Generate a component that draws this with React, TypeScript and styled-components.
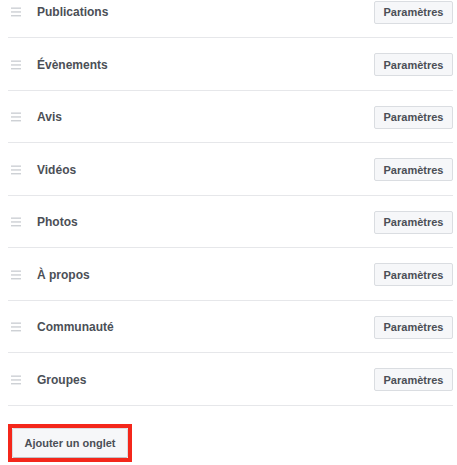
import styled, { createGlobalStyle } from "styled-components";

const GlobalStyle = createGlobalStyle`
  html, body {
    margin: 0;
    padding: 0;
    background: #ffffff;
    overflow: hidden;
  }
  body {
    font-family: "Liberation Sans", Arial, sans-serif;
    color: #4b4f56;
  }
`;

const Page = styled.div`
  padding: 0 4px 0 8px;
  margin-top: -14.5px;
`;

const TabList = styled.ul`
  list-style: none;
  margin: 0;
  padding: 0;
`;

const TabRow = styled.li`
  box-sizing: border-box;
  height: 52.5px;
  display: flex;
  align-items: center;
  border-bottom: 1px solid #e6e7ea;
  padding-top: 2px;
`;

const Handle = styled.svg`
  flex: none;
  margin-left: 3px;
  margin-right: 16px;
`;

const TabName = styled.span`
  flex: 1;
  font-size: 12px;
  font-weight: bold;
  color: #4b4f56;
`;

const Button = styled.button<{ $big?: boolean }>`
  box-sizing: border-box;
  font-family: "Liberation Sans", Arial, sans-serif;
  font-size: 11px;
  font-weight: bold;
  color: #4b4f56;
  background: #f6f7f9;
  border: 1px solid #dadde1;
  border-bottom-color: ${p => (p.$big ? "#bfc2c7" : "#dadde1")};
  border-radius: 2px;
  height: ${p => (p.$big ? "30px" : "23px")};
  width: ${p => (p.$big ? "116px" : "79px")};
  padding: 0;
  cursor: pointer;
`;

const Footer = styled.div`
  padding-top: 18px;
`;

const Highlight = styled.div`
  display: inline-flex;
  border: 4px solid #f4271b;
`;

const tabs = [
  "Publications",
  "Évènements",
  "Avis",
  "Vidéos",
  "Photos",
  "À propos",
  "Communauté",
  "Groupes",
];

const HandleIcon = () => (
  <Handle width="10" height="10" viewBox="0 0 10 10">
    <rect x="0" y="0.5" width="10" height="1.3" fill="#c9ccd1" />
    <rect x="0" y="4.3" width="10" height="1.3" fill="#c9ccd1" />
    <rect x="0" y="8.1" width="10" height="1.3" fill="#c9ccd1" />
  </Handle>
);

export default function App() {
  return <>
    <GlobalStyle />
    <Page>
      <TabList>
        {tabs.map(t => (
          <TabRow key={t}>
            <HandleIcon />
            <TabName>{t}</TabName>
            <Button>Paramètres</Button>
          </TabRow>
        ))}
      </TabList>
      <Footer>
        <Highlight>
          <Button $big>Ajouter un onglet</Button>
        </Highlight>
      </Footer>
    </Page>
  </>;
}
